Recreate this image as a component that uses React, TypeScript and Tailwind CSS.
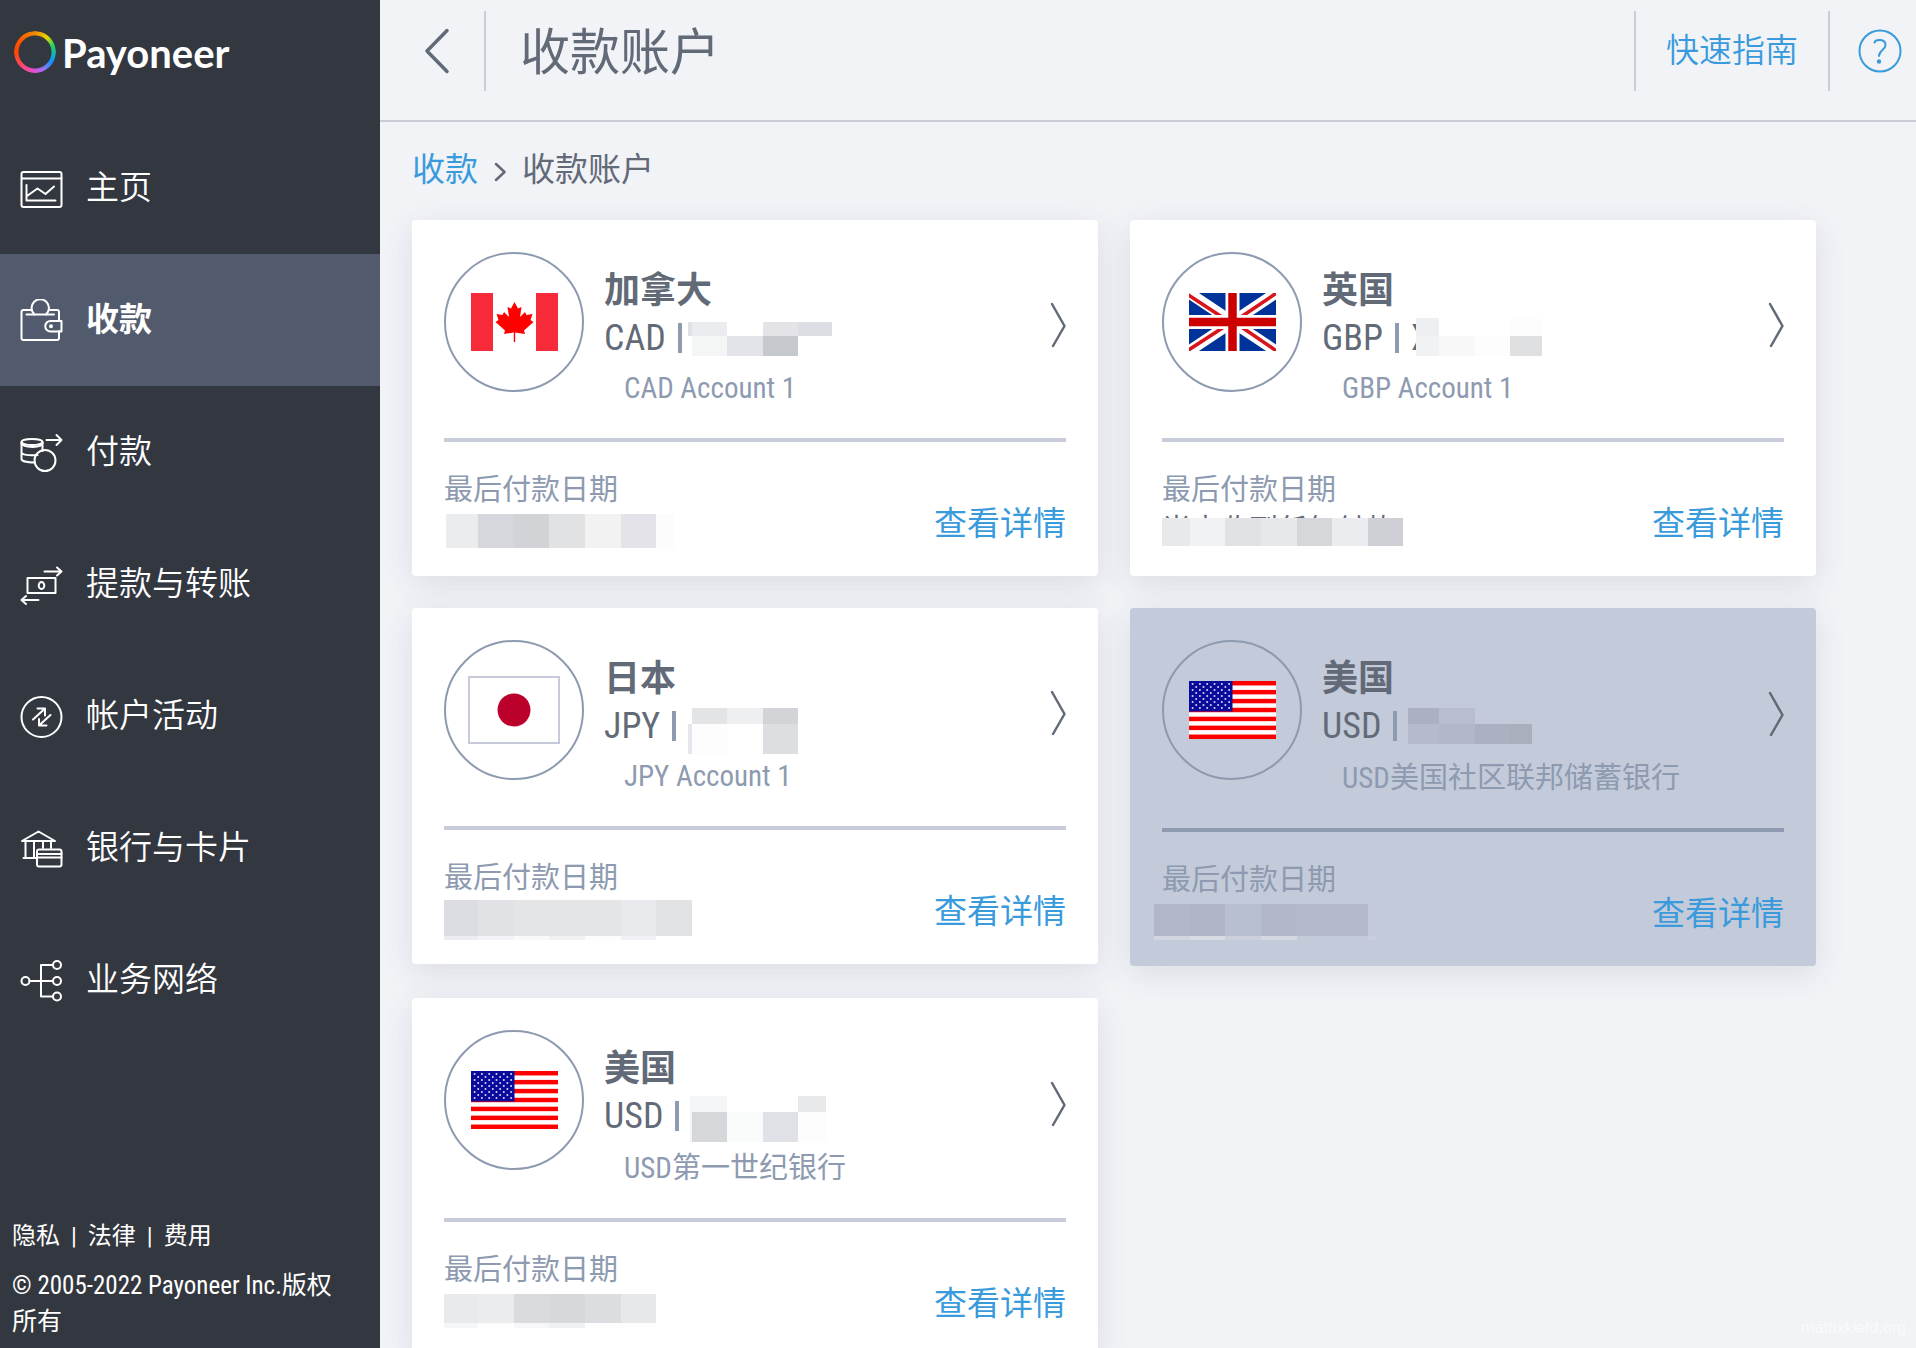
import type { ReactNode } from 'react';

type Block = [x: number, y: number, w: number, h: number, fill: string];

type Account = {
  id: string;
  country: string;
  currency: string;
  number: string;
  name: string;
  date: string;
  flag: ReactNode;
  highlighted?: boolean;
  blocks: Block[];
};

const stroke = {
  fill: 'none',
  stroke: 'currentColor',
  strokeWidth: 2,
  strokeLinecap: 'round' as const,
  strokeLinejoin: 'round' as const,
};

function NavIcon({ children }: { children: ReactNode }) {
  return (
    <svg viewBox="0 0 44 44" className="mt-[2px] h-11 w-11 shrink-0" aria-hidden="true" {...stroke}>
      {children}
    </svg>
  );
}

const navItems: { label: string; icon: ReactNode; active?: boolean }[] = [
  {
    label: '主页',
    icon: (
      <>
        <rect x="1.500" y="5" width="40" height="35" rx="2" />
        <path d="M2 11.500H41.500M6.500 18V33.500H35.500M7 29L17.500 21.500L25.500 27L34 19.500" />
      </>
    ),
  },
  {
    label: '收款',
    active: true,
    icon: (
      <>
        <path d="M12 11H3.500a2 2 0 0 0-2 2V39a2 2 0 0 0 2 2H37a2 2 0 0 0 2-2V32M39 22V13a2 2 0 0 0-2-2H30M6.500 15.500H34" />
        <path d="M14.500 15.500A8.700 8.700 0 1 1 26 15.500" />
        <path d="M41.500 22H30.500a5 5 0 0 0 0 10.500H41.500Z" />
        <circle cx="31" cy="27.200" r="1" />
      </>
    ),
  },
  {
    label: '付款',
    icon: (
      <>
        <ellipse cx="12" cy="11" rx="10.500" ry="3" />
        <path d="M1.500 11V28C1.500 30 7 31.500 15 31.500M22.500 11V20M1.500 21.500C2 23.500 8 25 17.500 24" />
        <path d="M1.500 12.500C3 17 22 17 22.500 12.500" />
        <circle cx="25" cy="29.500" r="10.500" />
        <path d="M26.500 9H41.500M36.500 4L41.500 9L36.500 14" />
      </>
    ),
  },
  {
    label: '提款与转账',
    icon: (
      <>
        <rect x="7.500" y="15" width="28" height="15" />
        <ellipse cx="21.500" cy="22.500" rx="2.800" ry="3.500" />
        <path d="M24.500 8.500H41M37 4.500L41.500 8.500L37 12.500M18.500 37H2M6 33L1.500 37L6 41" />
      </>
    ),
  },
  {
    label: '帐户活动',
    icon: (
      <>
        <circle cx="21.500" cy="22" r="20" />
        <path d="M13 24.500L24.500 14M17.500 13.500H25V20.500M30.500 20L19.500 30M26.500 30.500H19V24" />
      </>
    ),
  },
  {
    label: '银行与卡片',
    icon: (
      <>
        <path d="M2 14L18.500 4.500L35 14ZM3.500 31H17M5.500 14V31M14 14V31M23 14V21M31 14V21" />
        <rect x="17" y="22.500" width="24.500" height="17" rx="2" />
        <path d="M17 27H41.500M17 30.500H41.500" />
      </>
    ),
  },
  {
    label: '业务网络',
    icon: (
      <>
        <circle cx="5.500" cy="22" r="4" />
        <circle cx="37" cy="6" r="4" />
        <circle cx="37" cy="22" r="4" />
        <circle cx="37" cy="37.500" r="4" />
        <path d="M9.500 22H33M33 6H21V37.500H33" />
      </>
    ),
  },
];

function CanadaFlag() {
  return (
    <svg viewBox="0 0 87 58" className="h-[58px] w-[87px]" role="img" aria-label="加拿大国旗">
      <rect width="87" height="58" fill="#fff" />
      <rect width="22" height="58" fill="#f72a3a" />
      <rect x="65" width="22" height="58" fill="#f72a3a" />
      <path
        fill="#ff0000"
        d="M43.500 9L47 15.500L50.500 14L49 24L54 19L55.500 22L61.500 21L59.500 27L62.500 29L53 37.500L54 41L44.200 39.500V49H42.800V39.500L33 41L34 37.500L24.500 29L27.500 27L25.500 21L31.500 22L33 19L38 24L36.500 14L40 15.500Z"
      />
    </svg>
  );
}

function UkFlag() {
  return (
    <svg viewBox="0 0 87 58" className="h-[58px] w-[87px]" role="img" aria-label="英国国旗">
      <rect width="87" height="58" fill="#003399" />
      <path d="M0 0L87 58M87 0L0 58" stroke="#fff" strokeWidth="11" />
      <path d="M-2 1L36 26M51 33L89 59M89 -1L49 26M38 32L-2 58" stroke="#d8141c" strokeWidth="3.600" />
      <path d="M43.500 0V58M0 29H87" stroke="#fff" strokeWidth="14" />
      <path d="M43.500 0V58M0 29H87" stroke="#cc0000" strokeWidth="8.500" />
    </svg>
  );
}

function JapanFlag() {
  return (
    <svg viewBox="0 0 92 68" className="h-[68px] w-[92px]" role="img" aria-label="日本国旗">
      <rect x="1" y="1" width="90" height="66" fill="#fff" stroke="#c7cad8" strokeWidth="2" />
      <circle cx="46" cy="34" r="16.500" fill="#bb002b" />
    </svg>
  );
}

function UsFlag() {
  const stripes = [0, 2, 4, 6, 8, 10, 12];
  const stars: [number, number][] = [];
  for (let row = 0; row < 9; row++) {
    const count = row % 2 === 0 ? 6 : 5;
    for (let i = 0; i < count; i++) {
      stars.push([(row % 2 === 0 ? 3.6 : 7.2) + i * 7.3, 3 + row * 3]);
    }
  }
  return (
    <svg viewBox="0 0 87 58" className="h-[58px] w-[87px]" role="img" aria-label="美国国旗">
      <rect width="87" height="58" fill="#fff" />
      {stripes.map((s) => (
        <rect key={s} y={(s * 58) / 13} width="87" height={58 / 13} fill="#ff0000" />
      ))}
      <rect width="43.500" height="30.500" fill="#0a0a9c" />
      {stars.map(([x, y]) => (
        <circle key={`${x}-${y}`} cx={x} cy={y} r="1" fill="#d8d8f4" />
      ))}
    </svg>
  );
}

const accounts: Account[] = [
  {
    id: 'cad',
    country: '加拿大',
    currency: 'CAD',
    number: '',
    name: 'CAD Account 1',
    date: '',
    flag: <CanadaFlag />,
    blocks: [
      [276, 102, 4, 14, '#e0e1e6'],
      [280, 102, 35, 14, '#ebecef'],
      [351, 102, 35, 14, '#e3e3e8'],
      [386, 102, 34, 14, '#dddee3'],
      [280, 116, 35, 20, '#f4f6f6'],
      [315, 116, 36, 20, '#e3e4e9'],
      [351, 116, 35, 20, '#c5c8cc'],
      [34, 294, 32, 34, '#ebecee'],
      [66, 294, 36, 34, '#d6d7dc'],
      [102, 294, 35, 34, '#d2d3d7'],
      [137, 294, 36, 34, '#e1e2e4'],
      [173, 294, 36, 34, '#f2f2f3'],
      [209, 294, 35, 34, '#e3e3e9'],
      [244, 294, 18, 34, '#fcfcfc'],
    ],
  },
  {
    id: 'gbp',
    country: '英国',
    currency: 'GBP',
    number: 'X',
    name: 'GBP Account 1',
    date: '尚未收到任何付款',
    flag: <UkFlag />,
    blocks: [
      [286, 98, 23, 18, '#edeff2'],
      [286, 116, 23, 20, '#f1f2f3'],
      [309, 116, 36, 20, '#f8f8f8'],
      [345, 116, 35, 20, '#fdfdfd'],
      [380, 98, 32, 18, '#fdfdfd'],
      [380, 116, 32, 20, '#dfe0e2'],
      [32, 298, 28, 28, '#e8e9eb'],
      [60, 298, 35, 28, '#f1f2f4'],
      [95, 298, 36, 28, '#e1e2e4'],
      [131, 298, 36, 28, '#e7e8ea'],
      [167, 298, 35, 28, '#d6d7db'],
      [202, 298, 36, 28, '#ebecef'],
      [238, 298, 35, 28, '#cfd0d5'],
    ],
  },
  {
    id: 'jpy',
    country: '日本',
    currency: 'JPY',
    number: '',
    name: 'JPY Account 1',
    date: '',
    flag: <JapanFlag />,
    blocks: [
      [280, 100, 35, 16, '#e3e4e6'],
      [315, 100, 36, 16, '#eeeff1'],
      [351, 100, 35, 16, '#d3d4d8'],
      [276, 116, 4, 30, '#e6e7ec'],
      [280, 116, 35, 30, '#fdfdfd'],
      [351, 116, 35, 30, '#dddee1'],
      [32, 292, 34, 36, '#dcdde2'],
      [66, 292, 36, 36, '#e1e2e5'],
      [102, 292, 107, 36, '#e4e5e7'],
      [209, 292, 35, 36, '#e9eaed'],
      [244, 292, 36, 36, '#e2e3e5'],
      [32, 328, 34, 4, '#ececf1'],
      [66, 328, 36, 4, '#f2f3f6'],
      [102, 328, 35, 4, '#f9f9f9'],
      [137, 328, 36, 4, '#f0f1f3'],
      [173, 328, 36, 4, '#fcfcfc'],
      [209, 328, 35, 4, '#f0f1f5'],
    ],
  },
  {
    id: 'usd-community',
    country: '美国',
    currency: 'USD',
    number: '',
    name: 'USD美国社区联邦储蓄银行',
    date: '',
    flag: <UsFlag />,
    highlighted: true,
    blocks: [
      [278, 100, 31, 16, '#abb1c2'],
      [309, 100, 36, 16, '#b8becd'],
      [278, 116, 31, 20, '#b5bbcc'],
      [309, 116, 36, 20, '#b2b8c9'],
      [345, 116, 35, 20, '#abb1c1'],
      [380, 116, 22, 20, '#a9afbd'],
      [24, 296, 36, 32, '#b2b8c9'],
      [60, 296, 35, 32, '#b0b6c8'],
      [95, 296, 36, 32, '#b8bfcf'],
      [131, 296, 36, 32, '#b2b8ca'],
      [167, 296, 71, 32, '#b3b9ca'],
      [24, 328, 36, 4, '#d1d5df'],
      [60, 328, 35, 4, '#dadce3'],
      [95, 328, 36, 4, '#ccd0dc'],
      [131, 328, 36, 4, '#d5d8e1'],
      [238, 328, 8, 4, '#cacfdf'],
    ],
  },
  {
    id: 'usd-first-century',
    country: '美国',
    currency: 'USD',
    number: '',
    name: 'USD第一世纪银行',
    date: '',
    flag: <UsFlag />,
    blocks: [
      [278, 98, 2, 46, '#f4f4f6'],
      [280, 98, 35, 16, '#f5f6f8'],
      [386, 98, 28, 16, '#e8e9eb'],
      [280, 114, 35, 30, '#d6d7db'],
      [315, 114, 36, 30, '#fafcfb'],
      [351, 114, 35, 30, '#e0e1e6'],
      [386, 114, 28, 30, '#fdfdfd'],
      [32, 296, 34, 29, '#e8eaee'],
      [66, 296, 36, 29, '#ebecee'],
      [102, 296, 35, 29, '#dadbdf'],
      [137, 296, 36, 29, '#d7d8dc'],
      [173, 296, 36, 29, '#dcdde1'],
      [209, 296, 35, 29, '#e7e8ea'],
      [32, 325, 34, 5, '#f5f6f8'],
      [66, 325, 36, 5, '#fdfdfd'],
      [102, 325, 35, 5, '#f7f7f9'],
      [137, 325, 36, 5, '#f0f1f2'],
      [209, 325, 35, 5, '#fdfdfd'],
    ],
  },
];

function AccountCard({ account }: { account: Account }) {
  const { highlighted } = account;
  return (
    <article
      className={`relative rounded-[4px] px-8 pt-8 pb-[26px] shadow-[0_8px_32px_rgba(60,65,90,0.12)] ${
        highlighted ? 'bg-[#c3cad9]' : 'bg-white'
      }`}
    >
      <div className="flex items-start">
        <div className="flex h-[140px] w-[140px] shrink-0 items-center justify-center rounded-full border-2 border-[#8d9ab0]">
          {account.flag}
        </div>
        <div className="ml-5 min-w-0 flex-1 pt-[17px]">
          <h2 className="text-[36px] leading-[44px] font-bold">{account.country}</h2>
          <div className="flex h-[49px] items-center text-[36px]">
            <span>{account.currency}</span>
            <span className="ml-3 h-[30px] w-1 bg-[#8d9ab0]" />
            <span className="ml-3">{account.number}</span>
          </div>
          <p
            className={`pl-5 text-[29px] text-[#8d9ab0] ${
              account.name.includes('Account') ? 'leading-[52px]' : 'pt-[2px] leading-[52px]'
            }`}
          >
            {account.name}
          </p>
        </div>
        <button type="button" aria-label={`打开 ${account.name}`} className="mb-4 self-center">
          <svg viewBox="0 0 16 46" className="h-[46px] w-4" aria-hidden="true" {...stroke} strokeWidth="2.500">
            <path d="M2 2L14.500 24L3 44" />
          </svg>
        </button>
      </div>
      <hr className={`mt-6 border-t-4 ${highlighted ? 'border-[#8d9ab0]' : 'border-[#c8cbd8]'}`} />
      <div className="mt-7 flex items-center justify-between">
        <div>
          <p className="text-[29px] leading-10 text-[#8d9ab0]">最后付款日期</p>
          <p className="h-10 text-[29px] leading-10">{account.date}</p>
        </div>
        <a href="#details" className="pt-7 text-[33px] leading-10 text-[#3a9bdc]">
          查看详情
        </a>
      </div>
      <svg className="pointer-events-none absolute inset-0 h-full w-full" aria-hidden="true" shapeRendering="crispEdges">
        {account.blocks.map(([x, y, w, h, fill]) => (
          <rect key={`${x}-${y}`} x={x} y={y} width={w} height={h} fill={fill} />
        ))}
      </svg>
    </article>
  );
}

function Sidebar() {
  return (
    <aside className="flex w-[380px] shrink-0 flex-col bg-[#33373f] text-white">
      <a href="#home" className="flex h-[122px] items-start gap-1.5 pt-6 pl-[14px]">
        <span
          aria-hidden="true"
          className="mt-[7px] h-[42px] w-[42px] rounded-full bg-[conic-gradient(#ee8a00,#e8d400_40deg,#20d860_70deg,#1090ff_120deg,#8a78f0_150deg,#e050d8_180deg,#f84880_215deg,#ff4800_270deg,#ff5000_300deg,#ee8a00)] [mask:radial-gradient(circle,transparent_16px,black_17px)]"
        />
        <span className="font-['Lato'] text-[40px] leading-[58px] font-bold">Payoneer</span>
      </a>
      <nav aria-label="主菜单">
        {navItems.map((item) => (
          <a
            key={item.label}
            href="#menu"
            aria-current={item.active ? 'page' : undefined}
            className={`flex h-[132px] items-center gap-[22px] pl-5 text-[33px] ${
              item.active ? 'bg-[#515b6d] font-bold' : 'font-[350]'
            }`}
          >
            <NavIcon>{item.icon}</NavIcon>
            <span>{item.label}</span>
          </a>
        ))}
      </nav>
      <footer className="mt-auto px-3 pb-2 text-[24px] leading-9">
        <div className="flex gap-[11px]">
          <a href="#privacy">隐私</a>
          <span>|</span>
          <a href="#legal">法律</a>
          <span>|</span>
          <a href="#fees">费用</a>
        </div>
        <p className="mt-[14px] pr-8 text-[25px]">© 2005-2022 Payoneer Inc.版权所有</p>
      </footer>
    </aside>
  );
}

export default function App() {
  return (
    <div className="relative flex h-screen overflow-hidden bg-[#f1f3f7] font-['Roboto_Condensed','Liberation_Sans_Narrow','Roboto','Noto_Sans_CJK_SC',sans-serif] text-[#636a77]">
      <Sidebar />
      <main className="flex min-w-0 flex-1 flex-col">
        <header className="flex h-[122px] shrink-0 items-start border-b-2 border-[#c8cdd8] pt-[11px]">
          <button type="button" aria-label="返回" className="flex h-20 w-[104px] items-center pl-11">
            <svg viewBox="0 0 26 46" className="h-[46px] w-[26px]" aria-hidden="true" {...stroke} strokeWidth="3.500">
              <path d="M23 2.500L3 23L23 43.500" />
            </svg>
          </button>
          <span className="h-20 w-[2px] bg-[#c8cdd8]" />
          <h1 className="ml-[34px] text-[50px] leading-[84px]">收款账户</h1>
          <span className="ml-auto h-20 w-[2px] bg-[#c8cdd8]" />
          <a href="#guide" className="px-[30px] text-[33px] leading-20 font-[350] text-[#3a9bdc]">
            快速指南
          </a>
          <span className="h-20 w-[2px] bg-[#c8cdd8]" />
          <button type="button" aria-label="帮助" className="mr-[14px] ml-7 flex h-20 items-center text-[#3a9bdc]">
            <svg viewBox="0 0 44 44" className="h-11 w-11" aria-hidden="true" {...stroke}>
              <circle cx="22" cy="22" r="20.500" />
              <path d="M16.500 13.500C17.500 10 27.500 9.500 27.500 16C27.500 21 21 21 21 27" />
              <circle cx="21" cy="32.500" r="1.200" fill="currentColor" />
            </svg>
          </button>
        </header>
        <div className="min-h-0 flex-1 overflow-y-auto pr-[100px] pb-8 pl-8 [scrollbar-width:none]">
          <nav aria-label="面包屑" className="flex h-[98px] items-center pb-[2px] text-[33px]">
            <a href="#receive" className="text-[#3a9bdc]">
              收款
            </a>
            <svg viewBox="0 0 12 20" className="mt-1 mr-4 ml-4 h-5 w-3" aria-hidden="true" {...stroke} strokeWidth="2.500">
              <path d="M2 2L10.500 10L2 18" />
            </svg>
            <span>收款账户</span>
          </nav>
          <div className="grid grid-cols-2 items-start gap-8">
            {accounts.map((account) => (
              <AccountCard key={account.id} account={account} />
            ))}
          </div>
        </div>
      </main>
      <p className="absolute right-[10px] bottom-2 font-['Liberation_Sans'] text-[16px] leading-6 text-white/60">
        matrixkiefd.org
      </p>
    </div>
  );
}
